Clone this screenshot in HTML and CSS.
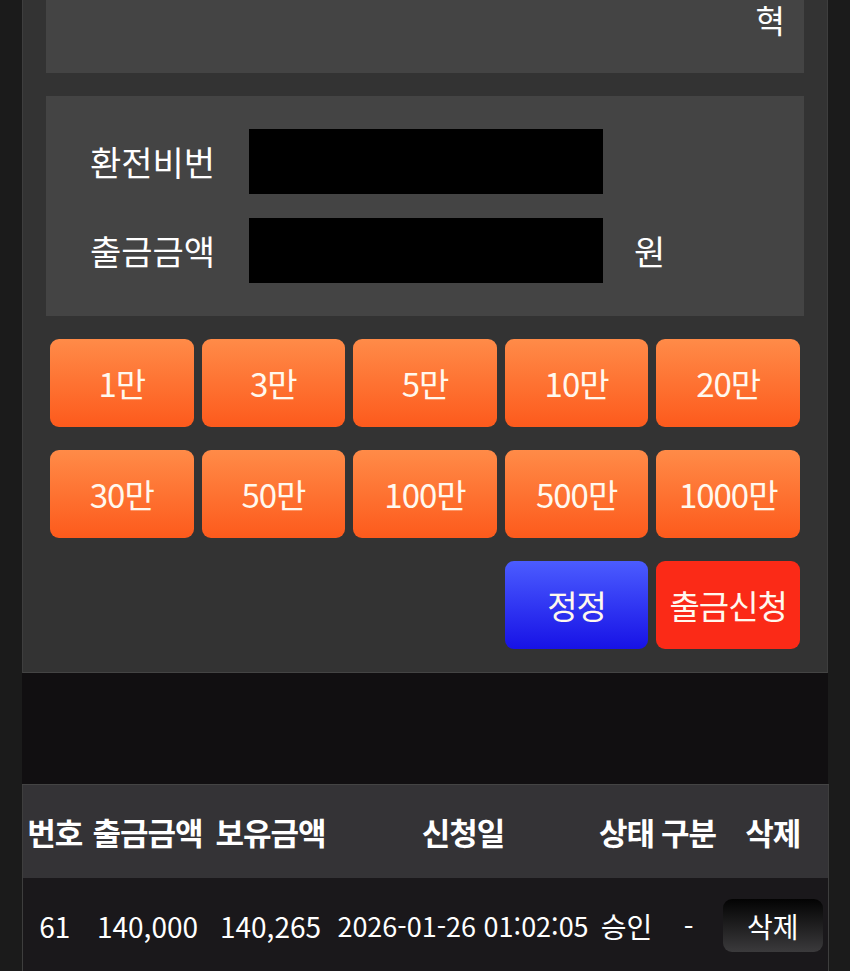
FILE: index.html
```html
<!DOCTYPE html>
<html lang="ko">
<head>
  <meta charset="UTF-8">
  <meta name="viewport" content="width=device-width, initial-scale=1">
  <title>출금신청</title>
  <link rel="stylesheet" href="styles.css">
</head>
<body>
  <div class="wrap">
    <div class="panel">
      <div class="info-box">
        <span class="holder">혁</span>
      </div>

      <div class="form-box">
        <div class="form-row">
          <label class="label">환전비번</label>
          <div class="input"></div>
          <span class="unit"></span>
        </div>
        <div class="form-row">
          <label class="label">출금금액</label>
          <div class="input"></div>
          <span class="unit">원</span>
        </div>
      </div>

      <div class="amounts">
        <button class="amt">1만</button>
        <button class="amt">3만</button>
        <button class="amt">5만</button>
        <button class="amt">10만</button>
        <button class="amt">20만</button>

        <button class="amt">30만</button>
        <button class="amt">50만</button>
        <button class="amt">100만</button>
        <button class="amt">500만</button>
        <button class="amt">1000만</button>

        <button class="reset">정정</button>
        <button class="submit">출금신청</button>
      </div>
    </div>

    <div class="spacer"></div>

    <table class="history">
      <colgroup>
        <col class="c-no">
        <col class="c-amount">
        <col class="c-balance">
        <col class="c-date">
        <col class="c-state">
        <col class="c-type">
        <col class="c-del">
      </colgroup>
      <thead>
        <tr>
          <th>번호</th>
          <th>출금금액</th>
          <th>보유금액</th>
          <th>신청일</th>
          <th>상태</th>
          <th>구분</th>
          <th>삭제</th>
        </tr>
      </thead>
      <tbody>
        <tr>
          <td>61</td>
          <td>140,000</td>
          <td>140,265</td>
          <td class="date">2026-01-26 01:02:05</td>
          <td>승인</td>
          <td>-</td>
          <td><button class="del">삭제</button></td>
        </tr>
      </tbody>
    </table>
  </div>
</body>
</html>
```

FILE: styles.css
```css
body {
  margin: 0;
  background: #1b1b1b;
  font-family: "Noto Sans CJK KR", "Noto Sans", sans-serif;
  color: #fff;
  overflow: hidden;
}

.wrap {
  width: 806px;
  margin: 0 auto;
}

.panel {
  background: #333;
  border-left: 1px solid #3e3e3e;
  border-right: 1px solid #3e3e3e;
  border-bottom: 1px solid #444;
  padding: 0 23px 23px;
}

.info-box {
  background: #444;
  height: 70px;
  padding: 3px 19px 0;
  text-align: right;
}

.holder {
  display: block;
  font-size: 32px;
  line-height: 32px;
}

.form-box {
  background: #444;
  margin-top: 23px;
  padding: 33px 0;
  display: flex;
  flex-direction: column;
  gap: 24px;
}

.form-row {
  display: flex;
  align-items: center;
  height: 65px;
}

.label {
  width: 159px;
  padding-left: 44px;
  font-size: 34px;
}

.input {
  width: 354px;
  height: 65px;
  background: #000;
}

.unit {
  margin-left: 31px;
  font-size: 34px;
}

.amounts {
  display: grid;
  grid-template-columns: repeat(5, 1fr);
  column-gap: 8px;
  row-gap: 23px;
  margin: 23px 4px 0;
}

.amounts button {
  height: 88px;
  border: none;
  border-radius: 9px;
  font-family: inherit;
  font-size: 33px;
  color: #fff8ee;
  padding: 0;
  letter-spacing: -1px;
}

.amt {
  background: linear-gradient(#ff8b48, #fd5a1c);
}

.reset {
  grid-column: 4;
  background: linear-gradient(#4b5cff, #1712e6);
}

.submit {
  background: #fb2a17;
}

.spacer {
  height: 111px;
  background: #110f11;
}

.history {
  width: 806px;
  border-collapse: collapse;
  table-layout: fixed;
  border-left: 1px solid #3e3e3e;
  border-right: 1px solid #3e3e3e;
}

.c-no { width: 64px; }
.c-amount { width: 122px; }
.c-balance { width: 124px; }
.c-date { width: 261px; }
.c-state { width: 66px; }
.c-type { width: 58px; }
.c-del { width: 111px; }

.history th {
  background: #343336;
  border-top: 1px solid #444;
  height: 93px;
  font-size: 31px;
  font-weight: 700;
  padding: 0;
  white-space: nowrap;
  letter-spacing: -1px;
}

.history td {
  background: #1a181b;
  height: 95px;
  text-align: center;
  font-size: 28px;
  padding: 0;
  white-space: nowrap;
}

.history .date {
  font-size: 27px;
}

.del {
  width: 100px;
  height: 53px;
  border: none;
  border-radius: 9px;
  background: linear-gradient(#030303, #3b3a3c);
  color: #fff;
  font-family: inherit;
  font-size: 28px;
  padding: 0;
}
```
